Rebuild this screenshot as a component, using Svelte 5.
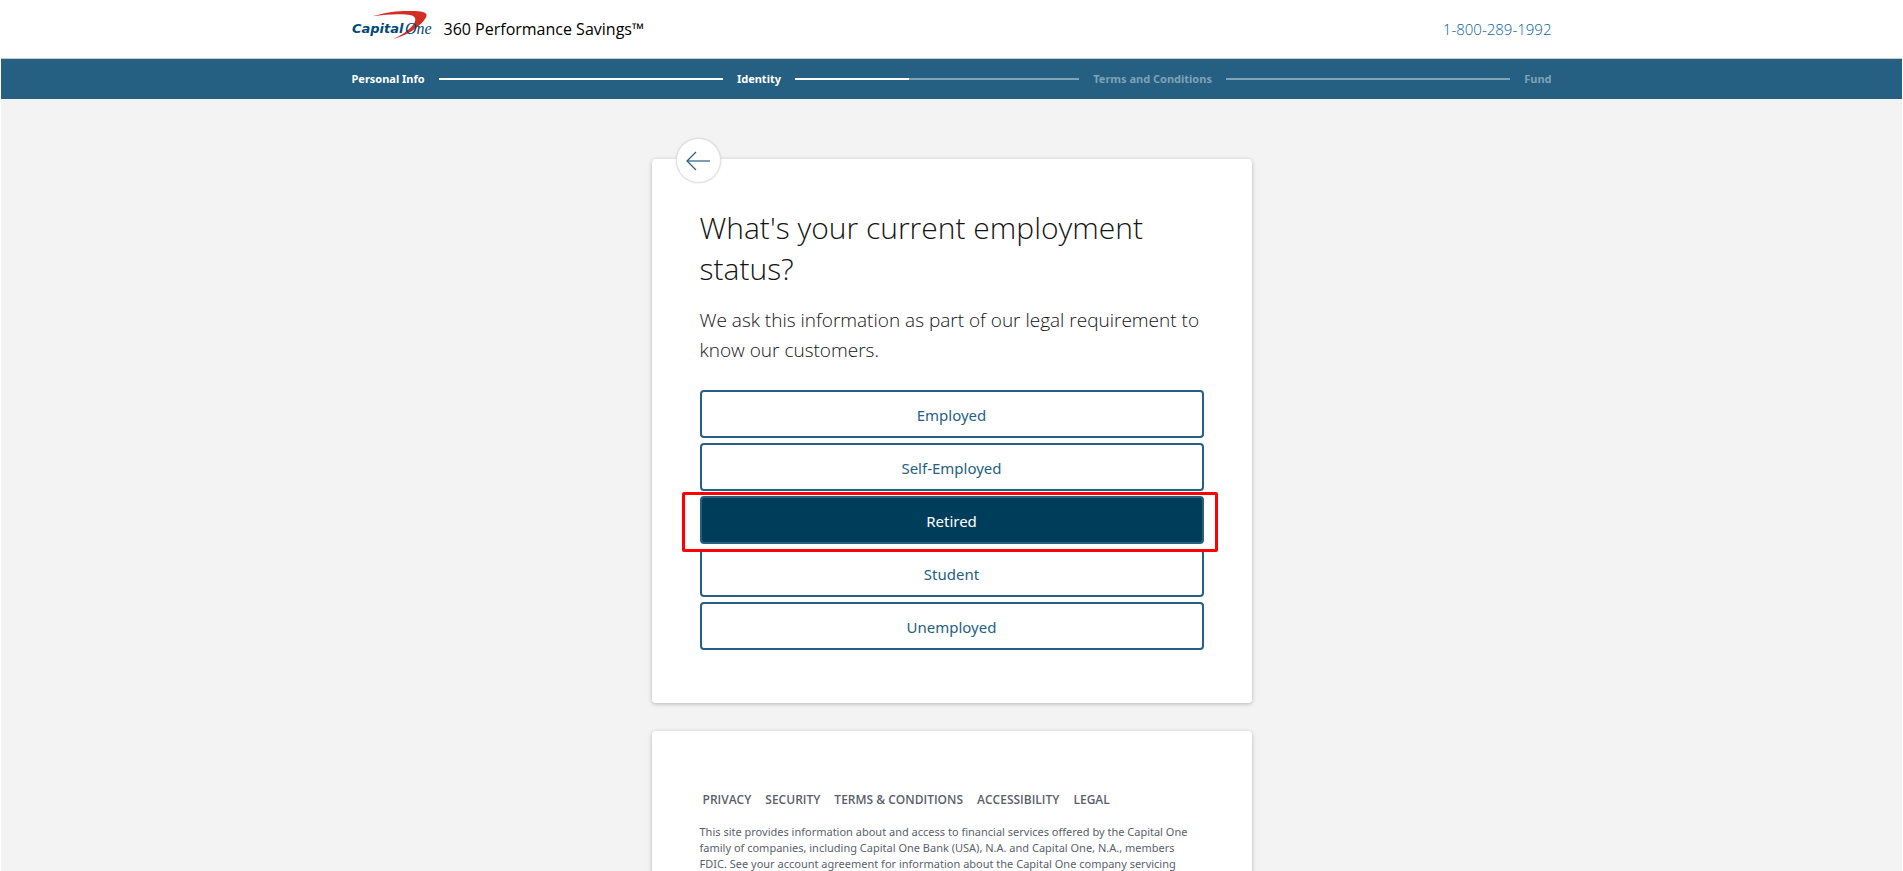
<script lang="ts">
  type Step = { label: string; reached: boolean; progress?: number };

  const steps: Step[] = [
    { label: 'Personal Info', reached: true, progress: 100 },
    { label: 'Identity', reached: true, progress: 40 },
    { label: 'Terms and Conditions', reached: false, progress: 0 },
    { label: 'Fund', reached: false },
  ];

  const statuses = ['Employed', 'Self-Employed', 'Retired', 'Student', 'Unemployed'];
  const links = ['Privacy', 'Security', 'Terms & Conditions', 'Accessibility', 'Legal'];

  let selected = $state('Retired');
</script>

<div class="page">
  <header class="header">
    <div class="container header-row">
      <a class="logo" href="#home" aria-label="Capital One">
        <svg width="80" height="30" viewBox="0 0 80 30">
          <path
            d="M20.5 6.2 C36 1.5 50 .6 60 1 C69 1.2 74.5 2.2 74.6 5 C74.5 8 71 12 66 16.5 C59 22 51 26.5 41 29.2 C50 25 57 20 61 15 C65 10 63.5 6.5 59 5.3 C51 3.5 36 4 20.5 6.2Z"
            fill="#d22e26"
          />
          <text class="logo-capital" x="0" y="23" font-size="13">Capital</text>
          <text class="logo-one" x="53" y="24" font-size="16">One</text>
        </svg>
      </a>
      <span class="product">360 Performance Savings™</span>
      <a class="phone" href="tel:18002891992">1-800-289-1992</a>
    </div>
  </header>

  <nav class="progress" aria-label="Application progress">
    <div class="container steps">
      {#each steps as step}
        <span class="step" class:reached={step.reached}>{step.label}</span>
        {#if step.progress !== undefined}
          <span class="track"><span class="fill" style="width: {step.progress}%"></span></span>
        {/if}
      {/each}
    </div>
  </nav>

  <main class="content">
    <section class="card question">
      <button class="back" type="button" aria-label="Back">
        <svg width="24" height="20" viewBox="0 0 24 20" fill="none" stroke="#255f82">
          <path d="M1 10H24" stroke-width="1.2" />
          <path d="M10 1L1 10L10 19" stroke-width="1.2" />
        </svg>
      </button>
      <h1>What's your current employment status?</h1>
      <p class="intro">We ask this information as part of our legal requirement to know our customers.</p>
      <div class="options">
        {#each statuses as status}
          <div class="option" class:marked={status === selected}>
            <button
              type="button"
              class:selected={status === selected}
              aria-pressed={status === selected}
              onclick={() => (selected = status)}>{status}</button
            >
          </div>
        {/each}
      </div>
    </section>

    <footer class="card footer">
      <nav class="links">
        {#each links as link}
          <a href="#{link.toLowerCase().replaceAll(' ', '-')}">{link}</a>
        {/each}
      </nav>
      <p>
        This site provides information about and access to financial services offered by the Capital One family of
        companies, including Capital One Bank (USA), N.A. and Capital One, N.A., members FDIC. See your account
        agreement for information about the Capital One company servicing
      </p>
    </footer>
  </main>
</div>

<style>
:global(body) {
  height: 100vh;
  overflow: hidden;
  background: #fff;
}

.page {
  box-sizing: border-box;
  height: 100vh;
  overflow: hidden;
  padding: 0 1px;
  font-family: "Noto Sans", "Open Sans", sans-serif;
  color: #141414;
}

.container {
  box-sizing: border-box;
  max-width: 1200px;
  margin: 0 auto;
}

.header {
  border-bottom: 1px solid #ccc;
}

.header-row {
  display: flex;
  align-items: center;
  height: 58px;
}

.logo {
  display: flex;
  margin-right: 12px;
  margin-bottom: 8px;
}

.logo svg {
  overflow: visible;
}

.logo-capital {
  font-family: "DejaVu Sans", sans-serif;
  font-weight: 700;
  font-style: italic;
  fill: #004977;
}

.logo-one {
  font-family: "Liberation Serif", serif;
  font-style: italic;
  fill: #004977;
}

.product {
  font-family: "Open Sans", sans-serif;
  font-size: 16px;
  color: #000;
}

.phone {
  margin-left: auto;
  font-family: "Open Sans", sans-serif;
  font-size: 15px;
  font-weight: 300;
  color: #0a5f9c;
  text-decoration: none;
}

.progress {
  background: #255f82;
}

.steps {
  display: flex;
  align-items: center;
  gap: 14px;
  height: 40px;
}

.step {
  padding-bottom: 2px;
  font-size: 11px;
  font-weight: 700;
  color: #7fa3b7;
  white-space: nowrap;
}

.step.reached {
  color: #fff;
}

.track {
  flex: 1;
  height: 2px;
  background: #7fa3b7;
}

.fill {
  display: block;
  height: 2px;
  background: #fff;
}

.content {
  display: flex;
  flex-direction: column;
  align-items: center;
  gap: 28px;
  min-height: 100vh;
  padding-top: 60px;
  background: #f3f3f3;
}

.card {
  box-sizing: border-box;
  width: 100%;
  max-width: 600px;
  padding: 48px;
  background: #fff;
  border-radius: 4px;
  box-shadow: 0 1px 4px rgba(0, 0, 0, 0.25);
}

.question {
  position: relative;
  padding-bottom: 53px;
}

.back {
  position: absolute;
  top: -21px;
  left: 24px;
  display: flex;
  align-items: center;
  justify-content: center;
  width: 45px;
  height: 45px;
  padding: 0;
  background: #fff;
  border: 1px solid #e0e0e0;
  border-radius: 50%;
  box-shadow: 0 0 2px rgba(0, 0, 0, 0.15);
}

h1 {
  margin: 0 0 16px;
  font-family: "Open Sans", sans-serif;
  font-size: 30px;
  font-weight: 300;
  line-height: 41px;
}

.intro {
  margin: 0 0 25px;
  font-family: "Open Sans", sans-serif;
  font-size: 19px;
  font-weight: 300;
  line-height: 30px;
}

.options {
  display: flex;
  flex-direction: column;
  gap: 5px;
}

.option {
  position: relative;
}

.option button {
  display: block;
  width: 100%;
  height: 48px;
  padding: 1px 0 0;
  background: #fff;
  border: 2px solid #255f82;
  border-radius: 4px;
  font-family: inherit;
  font-size: 15px;
  color: #255f82;
}

.option button.selected {
  background: #003d5b;
  color: #fff;
}

.marked::after {
  content: '';
  position: absolute;
  z-index: 1;
  inset: -4px -14px -8px -18px;
  border: 3px solid #f00;
  border-radius: 2px;
  pointer-events: none;
}

.links {
  display: flex;
  gap: 14px;
  margin: 13px 3px 16px;
}

.links a {
  font-family: "Open Sans", sans-serif;
  font-size: 12px;
  font-weight: 600;
  line-height: 16px;
  color: #5b5f6b;
  text-decoration: none;
  text-transform: uppercase;
}

.footer p {
  margin: 0;
  font-size: 11px;
  line-height: 16px;
  color: #5b5f6b;
}
</style>
